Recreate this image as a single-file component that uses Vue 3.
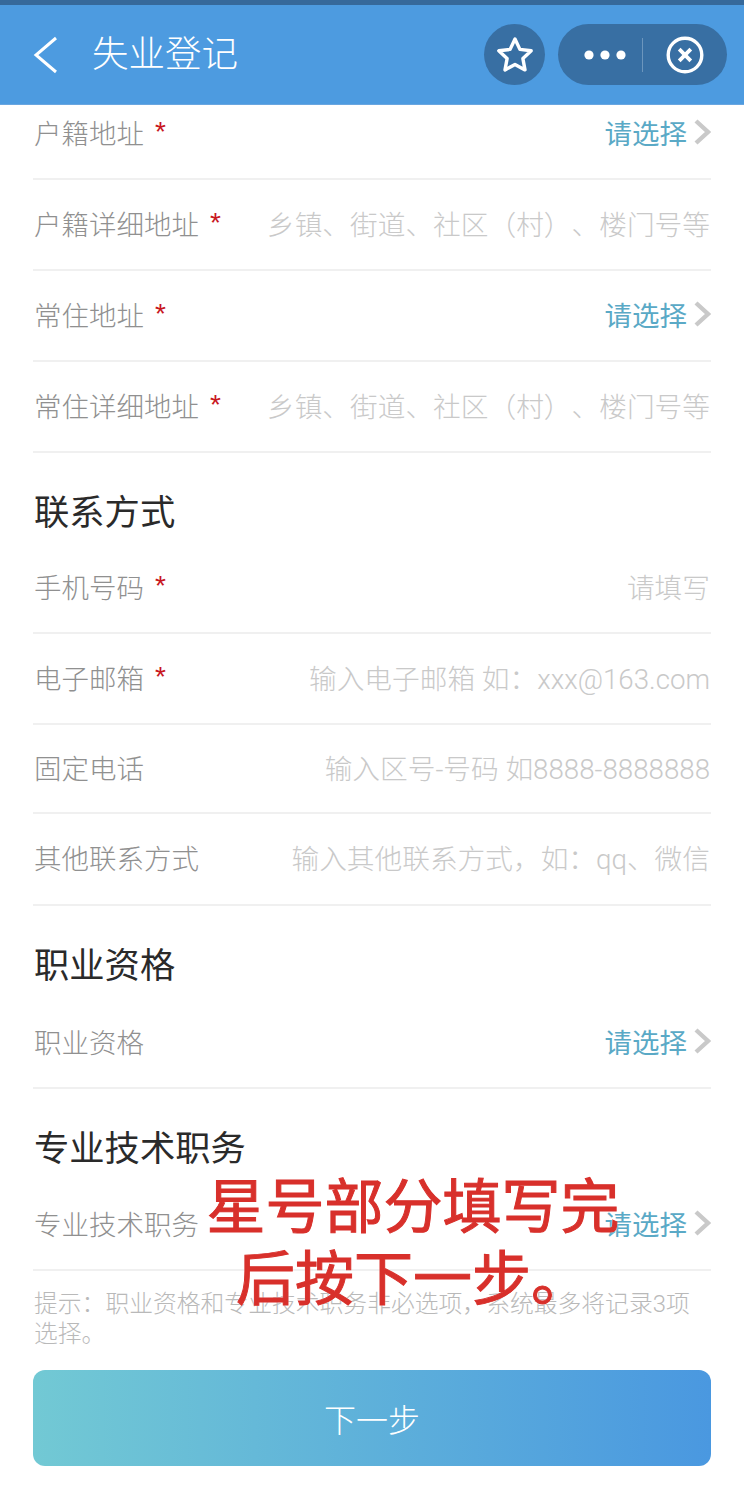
<script setup>
// rows of the registration form, grouped by section
const sections = [
  {
    rows: [
      { label: '户籍地址', required: true, select: true },
      { label: '户籍详细地址', required: true, hint: '乡镇、街道、社区（村）、楼门号等' },
      { label: '常住地址', required: true, select: true },
      { label: '常住详细地址', required: true, hint: '乡镇、街道、社区（村）、楼门号等' },
    ],
  },
  {
    title: '联系方式',
    titleSize: 'short',
    rows: [
      { label: '手机号码', required: true, hint: '请填写' },
      { label: '电子邮箱', required: true, hint: '输入电子邮箱 如：xxx@163.com' },
      { label: '固定电话', hint: '输入区号-号码 如8888-8888888', size: 'short' },
      { label: '其他联系方式', hint: '输入其他联系方式，如：qq、微信', size: 'tall' },
    ],
  },
  {
    title: '职业资格',
    titleSize: 'tall',
    rows: [{ label: '职业资格', select: true }],
  },
  {
    title: '专业技术职务',
    rows: [{ label: '专业技术职务', select: true }],
  },
]
</script>

<template>
  <div class="page">
    <header class="nav">
      <svg class="nav-back" width="26" height="38" viewBox="0 0 26 38">
        <path d="M24 2 L4 19 L24 36" fill="none" stroke="#fff" stroke-width="3" />
      </svg>
      <div class="nav-title">失业登记</div>
      <div class="nav-star">
        <svg width="38" height="38" viewBox="0 0 38 38">
          <path
            d="M19 3 L23.9 13.4 L35.2 14.8 L26.9 22.6 L29 33.9 L19 28.4 L9 33.9 L11.1 22.6 L2.8 14.8 L14.1 13.4 Z"
            fill="none"
            stroke="#fff"
            stroke-width="3.4"
            stroke-linejoin="round"
          />
        </svg>
      </div>
      <div class="nav-pill">
        <svg width="46" height="12" viewBox="0 0 46 12">
          <circle cx="7" cy="6" r="4.6" fill="#fff" />
          <circle cx="23" cy="6" r="4.6" fill="#fff" />
          <circle cx="39" cy="6" r="4.6" fill="#fff" />
        </svg>
        <span class="nav-divider"></span>
        <svg width="38" height="38" viewBox="0 0 38 38">
          <circle cx="19" cy="19" r="16.8" fill="none" stroke="#fff" stroke-width="3.4" />
          <path d="M13.2 13.2 L24.8 24.8 M24.8 13.2 L13.2 24.8" stroke="#fff" stroke-width="3.8" />
        </svg>
      </div>
    </header>

    <main class="scroll">
      <div class="form">
        <section v-for="(section, i) in sections" :key="i">
          <h2 v-if="section.title" class="section-title" :class="section.titleSize">{{ section.title }}</h2>
          <div v-for="row in section.rows" :key="row.label" class="row" :class="row.size">
            <span class="label">{{ row.label }}</span>
            <span v-if="row.required" class="star">*</span>
            <span v-if="row.hint" class="placeholder">{{ row.hint }}</span>
            <span v-if="row.select" class="select">
              请选择
              <svg width="18" height="26" viewBox="0 0 18 26">
                <path d="M3 2 L15 13 L3 24" fill="none" stroke="#c9c9c9" stroke-width="4.4" />
              </svg>
            </span>
          </div>
        </section>

        <p class="tip">提示：职业资格和专业技术职务非必选项，系统最多将记录3项选择。</p>
        <button class="next">下一步</button>
      </div>

      <!-- red note painted over the screenshot -->
      <div class="note">星号部分填写完<br />后按下一步。</div>
    </main>
  </div>
</template>

<style>
body {
  background: #fff;
}
</style>

<style scoped>
.page {
  width: 744px;
  height: 1500px;
  overflow: hidden;
  background: #fff;
  font-family: Roboto, "Noto Sans CJK SC", sans-serif;
  text-spacing-trim: space-all;
}

/* Title bar */
.nav {
  position: relative;
  z-index: 2;
  box-sizing: border-box;
  height: 105px;
  border-top: 5px solid #36699b;
  border-bottom: 1px solid #6aa6e0;
  padding: 0 17px 0 32px;
  display: flex;
  align-items: center;
  background: #4d9be0;
  color: #fff;
}
.nav-back {
  flex: none;
}
.nav-title {
  flex: 1;
  margin-left: 34px;
  font-size: 36.5px;
  line-height: 50px;
  font-weight: 300;
}
.nav-star {
  width: 61px;
  height: 61px;
  border-radius: 50%;
  background: #386fa3;
  display: flex;
  align-items: center;
  justify-content: center;
}
.nav-pill {
  box-sizing: border-box;
  width: 169px;
  height: 61px;
  margin-left: 13px;
  padding-left: 24px;
  border-radius: 31px;
  background: #386fa3;
  display: flex;
  align-items: center;
}
.nav-divider {
  width: 1px;
  height: 34px;
  margin: 0 23px 0 14px;
  background: #6c96bd;
}

/* Form */
.scroll {
  position: relative;
  height: 1395px;
  overflow: hidden;
}
.form {
  margin-top: -16px;
  padding: 0 33px;
}
.section-title {
  margin: 0;
  height: 91px;
  padding-top: 36px;
  padding-left: 1px;
  box-sizing: border-box;
  font-size: 35.3px;
  line-height: 48px;
  font-weight: 400;
  color: #2a2a2a;
}
.section-title.short {
  height: 90px;
}
.section-title.tall {
  height: 92px;
}
.row {
  box-sizing: border-box;
  height: 91px;
  padding-bottom: 4px;
  border-bottom: 2px solid #f0f0f0;
  display: flex;
  align-items: center;
  font-size: 27.5px;
  white-space: nowrap;
}
.row.short {
  height: 89px;
}
.row.tall {
  height: 92px;
}
.label {
  margin-left: 1px;
  color: #909090;
  font-weight: 300;
}
.star {
  margin-left: 11px;
  color: #c8161d;
  font-size: 28px;
  font-family: "Liberation Sans", sans-serif;
}
.placeholder {
  margin-left: auto;
  margin-right: 1px;
  color: #c9c9c9;
  font-size: 27.7px;
  font-weight: 300;
}
.select {
  margin-left: auto;
  display: flex;
  align-items: center;
  gap: 6px;
  color: #5aa9c6;
}
.tip {
  margin: 18px 0 0;
  padding-left: 1px;
  width: 665px;
  font-size: 23.8px;
  line-height: 30px;
  font-weight: 300;
  color: #b9b9b9;
}
.next {
  display: block;
  width: 100%;
  height: 96px;
  margin-top: 21px;
  border: none;
  border-radius: 12px;
  background: linear-gradient(90deg, #72c9d4, #4a98e0);
  color: #fff;
  font-family: inherit;
  font-size: 32px;
  font-weight: 300;
}

/* Overlay note */
.note {
  position: absolute;
  left: 113px;
  top: 1067px;
  width: 600px;
  text-align: center;
  font-size: 59px;
  line-height: 72px;
  font-weight: 400;
  color: #d8302b;
  -webkit-text-stroke: 1px #d8302b;
  text-shadow: 0 0 3px rgba(255, 255, 255, 0.9);
}
</style>
